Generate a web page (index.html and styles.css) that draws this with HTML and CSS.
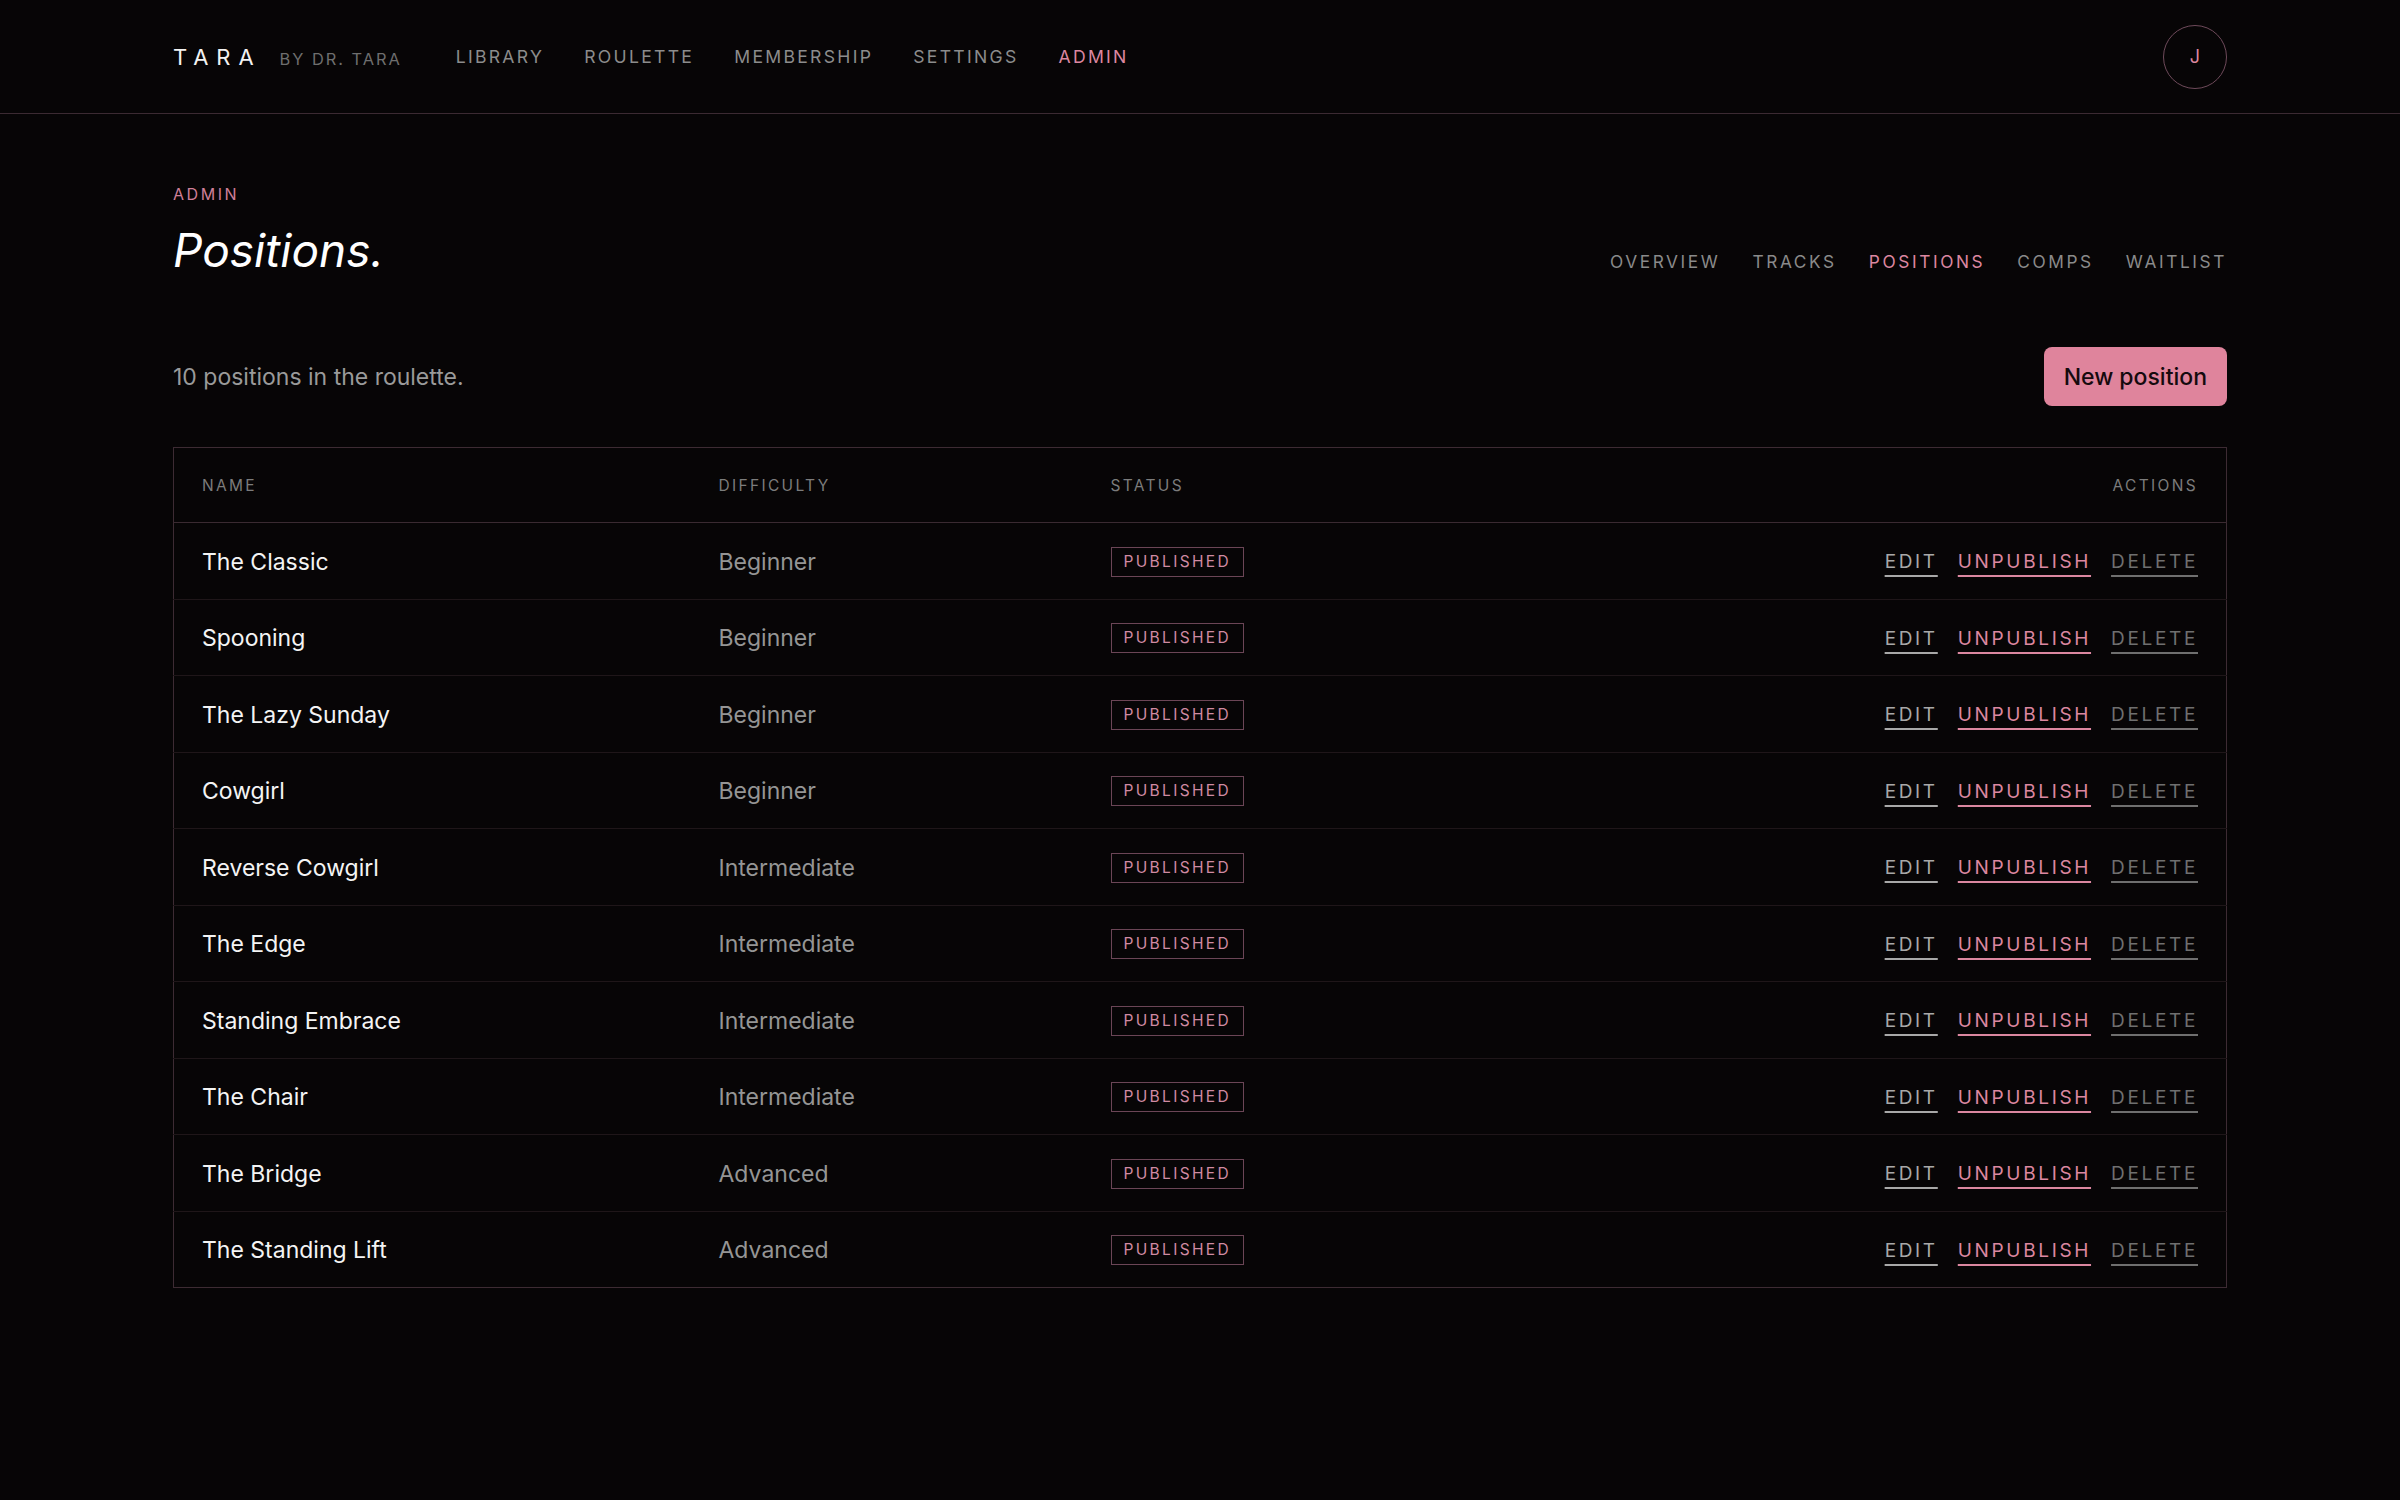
FILE: index.html
```html
<!DOCTYPE html>
<html lang="en">
<head>
  <meta charset="UTF-8">
  <meta name="viewport" content="width=device-width, initial-scale=1.0">
  <title>Positions · Admin · Tara</title>
  <link rel="stylesheet" href="styles.css">
</head>
<body>
  <header class="topbar">
    <div class="brand">
      <span class="brand-name">TARA</span>
      <span class="brand-by">BY DR. TARA</span>
    </div>
    <nav class="main-nav">
      <a href="#">LIBRARY</a>
      <a href="#">ROULETTE</a>
      <a href="#">MEMBERSHIP</a>
      <a href="#">SETTINGS</a>
      <a href="#" class="active">ADMIN</a>
    </nav>
    <div class="avatar">J</div>
  </header>

  <main class="page">
    <div class="page-head">
      <div>
        <div class="eyebrow">ADMIN</div>
        <h1>Positions.</h1>
      </div>
      <nav class="sub-nav">
        <a href="#">OVERVIEW</a>
        <a href="#">TRACKS</a>
        <a href="#" class="active">POSITIONS</a>
        <a href="#">COMPS</a>
        <a href="#">WAITLIST</a>
      </nav>
    </div>

    <div class="toolbar">
      <p class="count">10 positions in the roulette.</p>
      <button class="btn-primary">New position</button>
    </div>

    <table class="positions">
      <colgroup>
        <col class="col-name">
        <col class="col-difficulty">
        <col>
        <col class="col-actions">
      </colgroup>
      <thead>
        <tr>
          <th>NAME</th>
          <th>DIFFICULTY</th>
          <th>STATUS</th>
          <th class="right">ACTIONS</th>
        </tr>
      </thead>
      <tbody id="position-rows"></tbody>
    </table>
  </main>

  <script>
    const positions = [
      { name: 'The Classic', difficulty: 'Beginner' },
      { name: 'Spooning', difficulty: 'Beginner' },
      { name: 'The Lazy Sunday', difficulty: 'Beginner' },
      { name: 'Cowgirl', difficulty: 'Beginner' },
      { name: 'Reverse Cowgirl', difficulty: 'Intermediate' },
      { name: 'The Edge', difficulty: 'Intermediate' },
      { name: 'Standing Embrace', difficulty: 'Intermediate' },
      { name: 'The Chair', difficulty: 'Intermediate' },
      { name: 'The Bridge', difficulty: 'Advanced' },
      { name: 'The Standing Lift', difficulty: 'Advanced' },
    ];

    const tbody = document.getElementById('position-rows');

    positions.forEach((position) => {
      const row = document.createElement('tr');
      row.innerHTML = `
        <td class="name">${position.name}</td>
        <td class="difficulty">${position.difficulty}</td>
        <td><span class="badge">PUBLISHED</span></td>
        <td class="right">
          <div class="actions">
            <a href="#" class="act-edit">EDIT</a>
            <a href="#" class="act-unpublish">UNPUBLISH</a>
            <a href="#" class="act-delete">DELETE</a>
          </div>
        </td>
      `;
      tbody.appendChild(row);
    });
  </script>
</body>
</html>
```

FILE: styles.css
```css
body {
  margin: 0;
  background-color: #070506;
  color: #f2f2f2;
  font-family: Inter, 'Noto Sans', sans-serif;
}

a {
  text-decoration: none;
  color: inherit;
}

/* top bar */
.topbar {
  height: 114px;
  box-sizing: border-box;
  padding: 0 173px;
  display: flex;
  align-items: center;
  border-bottom: 1px solid #3b2a32;
}

.brand {
  display: flex;
  align-items: baseline;
  gap: 18px;
}

.brand-name {
  font-size: 22px;
  letter-spacing: 0.36em;
  color: #f2f2f2;
}

.brand-by {
  font-size: 16.4px;
  letter-spacing: 0.12em;
  color: #6e6e6e;
}

.main-nav {
  display: flex;
  gap: 40px;
  margin-left: 54px;
}

.main-nav a {
  font-size: 17.6px;
  letter-spacing: 0.13em;
  color: #8c8c8c;
}

.main-nav a.active {
  color: #dc87a0;
}

.avatar {
  margin-left: auto;
  width: 62px;
  height: 62px;
  border: 1.5px solid #6e4a5a;
  border-radius: 50%;
  display: flex;
  align-items: center;
  justify-content: center;
  font-size: 18px;
  color: #dc87a0;
}

/* page */
.page {
  padding: 70px 173px 80px;
}

.page-head {
  display: flex;
  justify-content: space-between;
  align-items: flex-end;
}

.eyebrow {
  font-size: 16px;
  line-height: 20px;
  letter-spacing: 0.16em;
  color: #cf7f98;
}

h1 {
  margin: 20px 0 0;
  font-size: 46px;
  line-height: 53px;
  font-style: italic;
  font-weight: 400;
  color: #ffffff;
}

.sub-nav {
  display: flex;
  gap: 32px;
  margin-bottom: 3px;
  line-height: 24px;
}

.sub-nav a {
  font-size: 17.3px;
  letter-spacing: 0.15em;
  color: #8a8a8a;
}

.sub-nav a.active {
  color: #dc87a0;
}

.toolbar {
  margin-top: 70px;
  display: flex;
  justify-content: space-between;
  align-items: center;
}

.count {
  margin: 0;
  font-size: 23px;
  color: #9a9a9a;
}

.btn-primary {
  height: 59px;
  padding: 0 20px;
  border: none;
  border-radius: 8px;
  background-color: #df849c;
  color: #150a0e;
  font-family: inherit;
  font-size: 23px;
  font-weight: 500;
}

/* table */
.positions {
  margin-top: 41px;
  width: 100%;
  border-collapse: collapse;
  table-layout: fixed;
  border: 1px solid #3d2b33;
}

.col-name { width: 517px; }
.col-difficulty { width: 392px; }
.col-actions { width: 520px; }

.positions th,
.positions td {
  padding: 0 28px;
  text-align: left;
}

.positions th {
  height: 74px;
  font-size: 15.5px;
  font-weight: 400;
  letter-spacing: 0.15em;
  color: #7c7c7c;
  border-bottom: 1px solid #3a2a31;
}

.positions td {
  height: 73.5px;
  padding-top: 2px;
  border-top: 1px solid #1f1619;
}

.positions .right {
  text-align: right;
}

.name {
  font-size: 23px;
  color: #f4f4f4;
}

.difficulty {
  font-size: 23px;
  color: #959595;
}

.badge {
  display: inline-block;
  padding: 0 12px;
  height: 28px;
  line-height: 28px;
  border: 1px solid #6b4556;
  font-size: 15.5px;
  letter-spacing: 0.15em;
  color: #d08aa2;
}

.actions {
  display: flex;
  justify-content: flex-end;
  gap: 20px;
}

.actions a {
  font-size: 19px;
  letter-spacing: 0.14em;
  text-decoration: underline;
  text-decoration-thickness: 2px;
  text-underline-offset: 7px;
}

.act-edit {
  color: #a8a8a8;
}

.act-unpublish {
  color: #dc87a0;
}

.act-delete {
  color: #6f6f6f;
}
```
